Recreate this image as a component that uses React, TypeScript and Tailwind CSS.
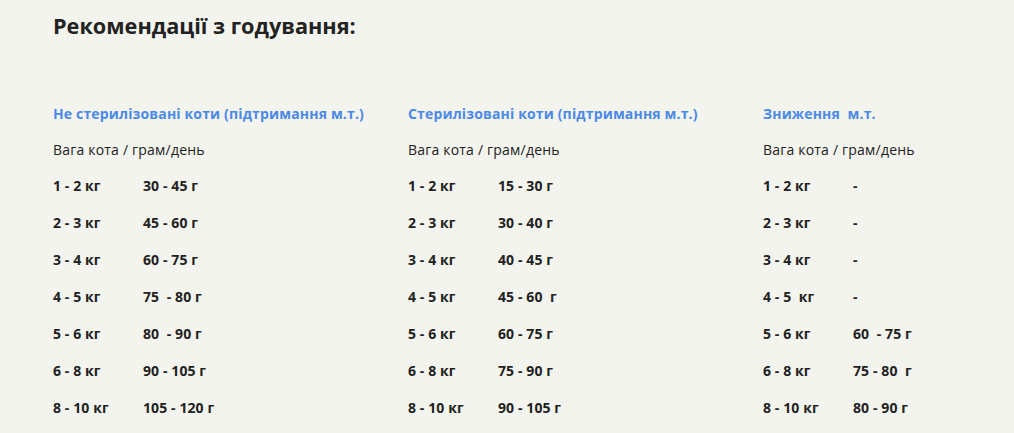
import React from "react";

type Col = { title: string; rows: [string, string][] };

const cols: Col[] = [
  {
    title: "Не стерилізовані коти (підтримання м.т.)",
    rows: [
      ["1 - 2 кг", "30 - 45 г"],
      ["2 - 3 кг", "45 - 60 г"],
      ["3 - 4 кг", "60 - 75 г"],
      ["4 - 5 кг", "75  - 80 г"],
      ["5 - 6 кг", "80  - 90 г"],
      ["6 - 8 кг", "90 - 105 г"],
      ["8 - 10 кг", "105 - 120 г"],
    ],
  },
  {
    title: "Стерилізовані коти (підтримання м.т.)",
    rows: [
      ["1 - 2 кг", "15 - 30 г"],
      ["2 - 3 кг", "30 - 40 г"],
      ["3 - 4 кг", "40 - 45 г"],
      ["4 - 5 кг", "45 - 60  г"],
      ["5 - 6 кг", "60 - 75 г"],
      ["6 - 8 кг", "75 - 90 г"],
      ["8 - 10 кг", "90 - 105 г"],
    ],
  },
  {
    title: "Зниження  м.т.",
    rows: [
      ["1 - 2 кг", "-"],
      ["2 - 3 кг", "-"],
      ["3 - 4 кг", "-"],
      ["4 - 5  кг", "-"],
      ["5 - 6 кг", "60  - 75 г"],
      ["6 - 8 кг", "75 - 80  г"],
      ["8 - 10 кг", "80 - 90 г"],
    ],
  },
];

export default function App() {
  return (
    <div
      className="w-[1014px] h-[433px] overflow-hidden bg-[#f4f4ee] text-[#222222] pl-[53px] pt-[11px]"
      style={{ fontFamily: '"Open Sans", "Liberation Sans", sans-serif' }}
    >
      <h2 className="text-[21.7px] font-bold leading-[30px]">Рекомендації з годування:</h2>
      <div className="grid grid-cols-[355px_355px_250px] mt-[63px]">
        {cols.map((c) => (
          <div key={c.title} className="flex flex-col">
            <div className="text-[14px] font-bold text-[#4a89e8] leading-[20px] tracking-[0.15px] whitespace-pre">{c.title}</div>
            <div className="text-[14px] leading-[20px] tracking-[0.2px] mt-[16px]">Вага кота / грам/день</div>
            <div className="flex flex-col mt-[16px] gap-[17px]">
              {c.rows.map(([a, b], i) => (
                <div key={i} className="flex text-[14px] font-bold leading-[20px] tracking-[0.1px] whitespace-pre">
                  <span className="w-[90px]">{a}</span>
                  <span>{b}</span>
                </div>
              ))}
            </div>
          </div>
        ))}
      </div>
    </div>
  );
}
